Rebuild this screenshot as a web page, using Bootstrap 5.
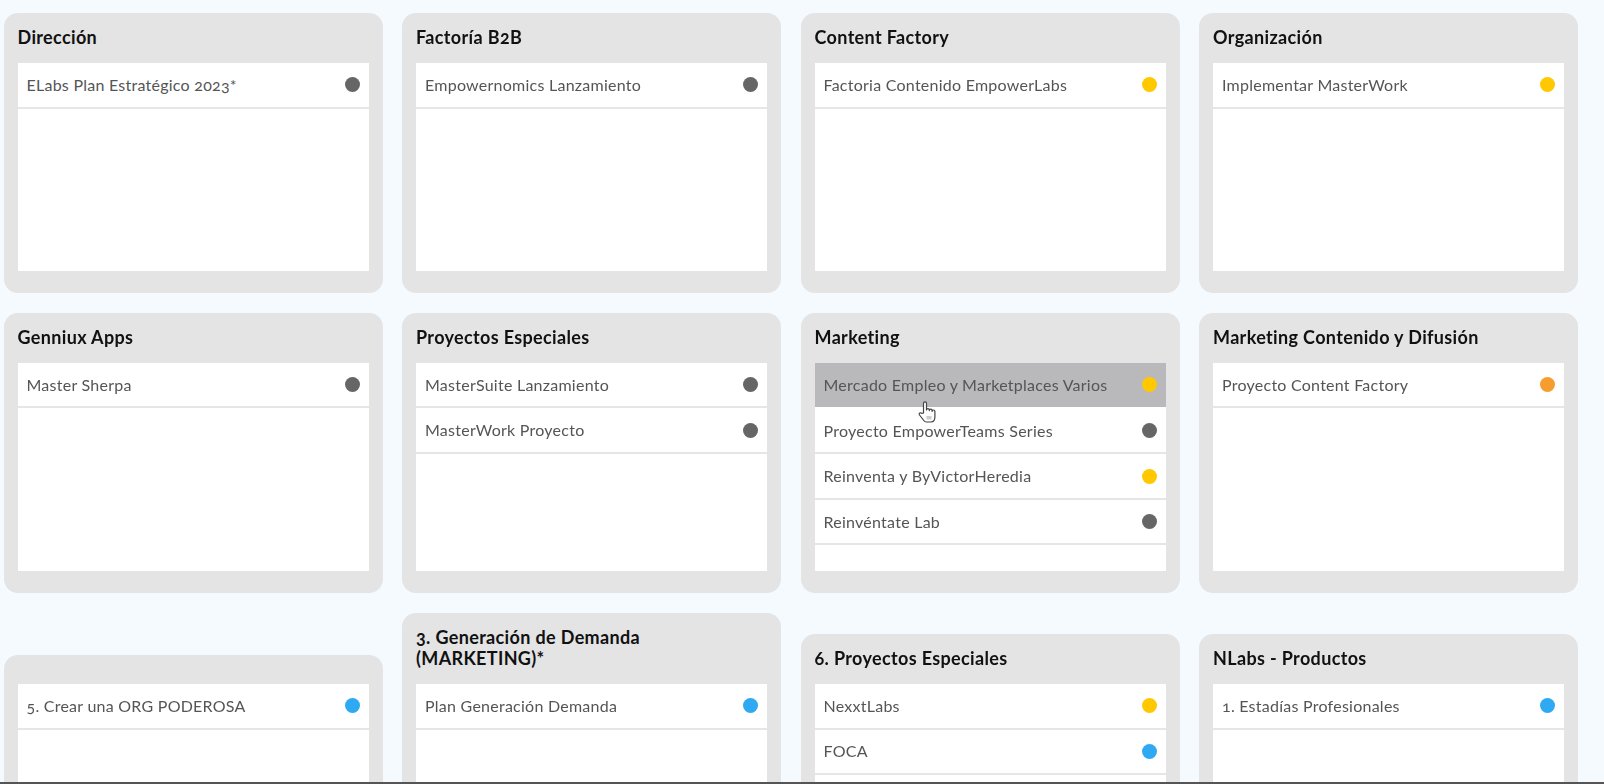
<!DOCTYPE html>
<html lang="es">
<head>
<meta charset="utf-8">
<title>Tablero</title>
<link href="https://cdn.jsdelivr.net/npm/bootstrap@5.3.0/dist/css/bootstrap.min.css" rel="stylesheet">
<style>
html,body{height:784px;overflow:hidden;background:#f5fafe;}
body{font-family:"Lato","Liberation Sans",sans-serif;font-feature-settings:"onum";}
.stage{height:784px;overflow:hidden;border-bottom:2px solid #555;position:relative;}
.board{display:grid;grid-template-columns:repeat(4,379px);column-gap:19.5px;row-gap:19.8px;padding:13px 0 0 3.5px;align-items:end;filter:blur(.45px);}
.panel{background:#e4e4e5;border-radius:14px;padding:0 14px 22px;}
.panel-title{font-size:18px;font-weight:700;letter-spacing:.35px;color:#111;line-height:21.5px;padding:14px 0 14.5px;margin:0;}
.panel-title.none{height:29px;padding:0;}
.task-box{background:#fff;height:208px;overflow:hidden;}
.task{height:45.5px;border-bottom:2.5px solid #e6e6e7;padding:0 9px;font-size:16px;letter-spacing:.25px;color:#555;}
.task.hovered{background:#b9b8ba;height:46px;border-bottom-color:#fff;border-bottom-width:2px;}
.dot{width:15px;height:15px;border-radius:50%;flex:none;}
.dot-g{background:#666;}.dot-y{background:#ffc800;}.dot-o{background:#f79c2e;}.dot-b{background:#2fa9f2;}
.hand{position:absolute;left:917px;top:400px;width:20px;height:24px;filter:blur(.4px);}
</style>
</head>
<body>
<div class="stage">
<div class="board">
<section class="panel"><h6 class="panel-title">Dirección</h6><div class="task-box"><div class="task d-flex align-items-center justify-content-between"><span>ELabs Plan Estratégico 2023*</span><span class="dot dot-g"></span></div></div></section>
<section class="panel"><h6 class="panel-title">Factoría B2B</h6><div class="task-box"><div class="task d-flex align-items-center justify-content-between"><span>Empowernomics Lanzamiento</span><span class="dot dot-g"></span></div></div></section>
<section class="panel"><h6 class="panel-title">Content Factory</h6><div class="task-box"><div class="task d-flex align-items-center justify-content-between"><span>Factoria Contenido EmpowerLabs</span><span class="dot dot-y"></span></div></div></section>
<section class="panel"><h6 class="panel-title">Organización</h6><div class="task-box"><div class="task d-flex align-items-center justify-content-between"><span>Implementar MasterWork</span><span class="dot dot-y"></span></div></div></section>

<section class="panel"><h6 class="panel-title">Genniux Apps</h6><div class="task-box"><div class="task d-flex align-items-center justify-content-between"><span>Master Sherpa</span><span class="dot dot-g"></span></div></div></section>
<section class="panel"><h6 class="panel-title">Proyectos Especiales</h6><div class="task-box"><div class="task d-flex align-items-center justify-content-between"><span>MasterSuite Lanzamiento</span><span class="dot dot-g"></span></div><div class="task d-flex align-items-center justify-content-between"><span>MasterWork Proyecto</span><span class="dot dot-g"></span></div></div></section>
<section class="panel"><h6 class="panel-title">Marketing</h6><div class="task-box"><div class="task hovered d-flex align-items-center justify-content-between"><span>Mercado Empleo y Marketplaces Varios</span><span class="dot dot-y"></span></div><div class="task d-flex align-items-center justify-content-between"><span>Proyecto EmpowerTeams Series</span><span class="dot dot-g"></span></div><div class="task d-flex align-items-center justify-content-between"><span>Reinventa y ByVictorHeredia</span><span class="dot dot-y"></span></div><div class="task d-flex align-items-center justify-content-between"><span>Reinvéntate Lab</span><span class="dot dot-g"></span></div></div></section>
<section class="panel"><h6 class="panel-title">Marketing Contenido y Difusión</h6><div class="task-box"><div class="task d-flex align-items-center justify-content-between"><span>Proyecto Content Factory</span><span class="dot dot-o"></span></div></div></section>

<section class="panel"><h6 class="panel-title none"></h6><div class="task-box"><div class="task d-flex align-items-center justify-content-between"><span>5. Crear una ORG PODEROSA</span><span class="dot dot-b"></span></div></div></section>
<section class="panel"><h6 class="panel-title">3. Generación de Demanda<br>(MARKETING)*</h6><div class="task-box"><div class="task d-flex align-items-center justify-content-between"><span>Plan Generación Demanda</span><span class="dot dot-b"></span></div></div></section>
<section class="panel"><h6 class="panel-title">6. Proyectos Especiales</h6><div class="task-box"><div class="task d-flex align-items-center justify-content-between"><span>NexxtLabs</span><span class="dot dot-y"></span></div><div class="task d-flex align-items-center justify-content-between"><span>FOCA</span><span class="dot dot-b"></span></div></div></section>
<section class="panel"><h6 class="panel-title">NLabs - Productos</h6><div class="task-box"><div class="task d-flex align-items-center justify-content-between"><span>1. Estadías Profesionales</span><span class="dot dot-b"></span></div></div></section>
</div>
<svg class="hand" viewBox="0 0 20 24" aria-hidden="true"><path d="M6.500 13V3.400a1.500 1.500 0 0 1 3 0V10a1.400 1.400 0 0 1 2.800 0v.6a1.400 1.400 0 0 1 2.800 0v.8a1.400 1.400 0 0 1 2.800 0V17c0 3-1.500 5-4 5H9.500c-1.200 0-2-.5-2.700-1.500L2.500 15c-1-1.500 1-3 2.400-1.700z" fill="#fff" stroke="#444" stroke-width="1.200" stroke-linejoin="round"/><path d="M9.500 16h5v3.500h-5z" fill="#ccc"/></svg>
</div>
</body>
</html>
